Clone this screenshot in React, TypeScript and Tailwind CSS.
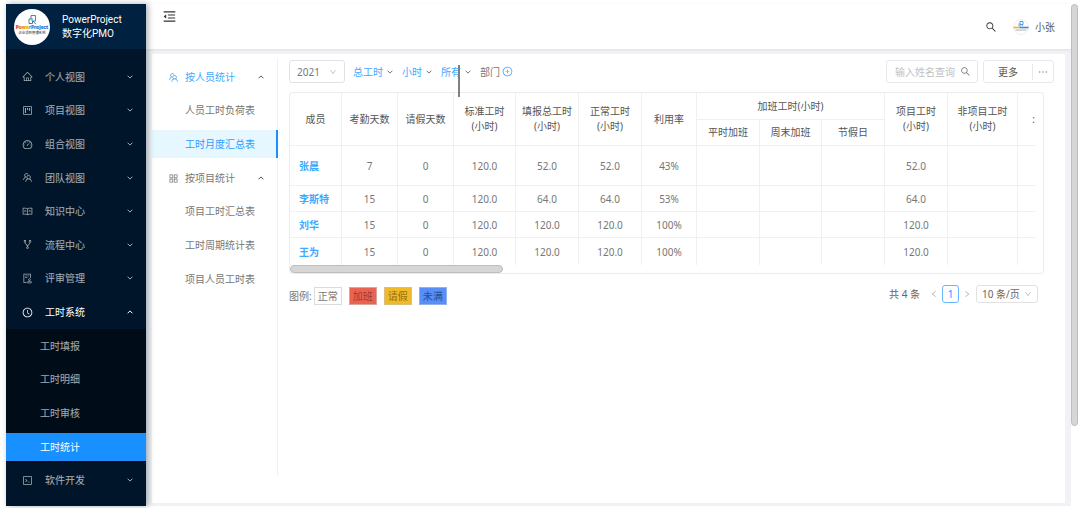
import type { IconType } from "react-icons";
import {
  AiOutlineAppstore,
  AiOutlineAudit,
  AiOutlineClockCircle,
  AiOutlineCode,
  AiOutlineDashboard,
  AiOutlineDown,
  AiOutlineEllipsis,
  AiOutlineFork,
  AiOutlineHome,
  AiOutlineLeft,
  AiOutlineMenuFold,
  AiOutlinePlusCircle,
  AiOutlineProject,
  AiOutlineRead,
  AiOutlineRight,
  AiOutlineSearch,
  AiOutlineTeam,
} from "react-icons/ai";

type MenuGroup = {
  label: string;
  icon: IconType;
  children?: string[];
};

const mainMenu: MenuGroup[] = [
  { label: "个人视图", icon: AiOutlineHome },
  { label: "项目视图", icon: AiOutlineProject },
  { label: "组合视图", icon: AiOutlineDashboard },
  { label: "团队视图", icon: AiOutlineTeam },
  { label: "知识中心", icon: AiOutlineRead },
  { label: "流程中心", icon: AiOutlineFork },
  { label: "评审管理", icon: AiOutlineAudit },
  {
    label: "工时系统",
    icon: AiOutlineClockCircle,
    children: ["工时填报", "工时明细", "工时审核", "工时统计"],
  },
  { label: "软件开发", icon: AiOutlineCode },
];

const reportMenu = [
  {
    label: "按人员统计",
    icon: AiOutlineTeam,
    children: ["人员工时负荷表", "工时月度汇总表"],
  },
  {
    label: "按项目统计",
    icon: AiOutlineAppstore,
    children: ["项目工时汇总表", "工时周期统计表", "项目人员工时表"],
  },
];

const activePage = "工时统计";
const activeReport = "工时月度汇总表";

const columnWidths = [52, 56, 56, 62, 63, 63, 55, 63, 62, 63, 63, 70, 17];

const members = [
  { name: "张晨", cells: ["7", "0", "120.0", "52.0", "52.0", "43%", "", "", "", "52.0", "", ""] },
  { name: "李斯特", cells: ["15", "0", "120.0", "64.0", "64.0", "53%", "", "", "", "64.0", "", ""] },
  { name: "刘华", cells: ["15", "0", "120.0", "120.0", "120.0", "100%", "", "", "", "120.0", "", ""] },
  { name: "王为", cells: ["15", "0", "120.0", "120.0", "120.0", "100%", "", "", "", "120.0", "", ""] },
];

const legend = [
  { label: "正常", className: "border-[#dcdcdc] bg-white text-[#777]" },
  { label: "加班", className: "border-[#d9a59d] bg-[#ea6350] text-[#a03c34]" },
  { label: "请假", className: "border-[#dcc07a] bg-[#f0b92a] text-[#96700f]" },
  { label: "未满", className: "border-[#94b2ea] bg-[#588ef5] text-[#2c4f8f]" },
];

function Arrow({ up = false, className = "" }: { up?: boolean; className?: string }) {
  return (
    <svg viewBox="0 0 6 4" className={`h-1 w-1.5 shrink-0 ${className}`} aria-hidden="true">
      <path
        d={up ? "M0.6 3.3 3 0.9 5.4 3.3" : "M0.6 0.7 3 3.1 5.4 0.7"}
        fill="none"
        stroke="currentColor"
        strokeWidth="1"
      />
    </svg>
  );
}

function Logo({ className }: { className: string }) {
  return (
    <svg viewBox="0 0 36 36" className={className} role="img" aria-label="PowerProject">
      <defs>
        <linearGradient id="brand" x1="0" x2="1">
          <stop offset="0" stopColor="#e5352b" />
          <stop offset="0.2" stopColor="#f0801e" />
          <stop offset="0.4" stopColor="#f0b400" />
          <stop offset="0.44" stopColor="#2f86e0" />
          <stop offset="1" stopColor="#1f6fd0" />
        </linearGradient>
      </defs>
      <circle cx="18" cy="18" r="18" fill="#fff" />
      <g fill="none" strokeWidth="1">
        <path d="M17 6.5h4.5v5.5h-3.5v-3" stroke="#3a8ad8" />
        <path d="M17 6.5v3.5h-2v4.5h3.5v-2.5M19 12l2.8 3.2" stroke="#5c7590" />
      </g>
      <text
        x="18"
        y="20.4"
        textAnchor="middle"
        fontSize="4.8"
        fontWeight="800"
        fill="url(#brand)"
        stroke="url(#brand)"
        strokeWidth="0.15"
      >
        PowerProject
      </text>
      <text x="18" y="24.8" textAnchor="middle" fontSize="3.4" fontWeight="500" fill="#555">
        企业项目管理系统
      </text>
    </svg>
  );
}

function Avatar() {
  return (
    <svg viewBox="0 0 16 16" className="size-4" aria-hidden="true">
      <circle cx="8" cy="8" r="7.5" fill="#fff" stroke="#eee" />
      <path d="M7 2.5h3v3h-3z" fill="none" stroke="#4a9be8" />
      <path d="M6 4.5v2.5h2M8.5 5.5l1.5 1.5" stroke="#8a98a6" fill="none" />
      <path d="M0.5 8.5h6.5" stroke="#efb03a" strokeWidth="1.6" />
      <path d="M7 8.5h8.5" stroke="#3f86d6" strokeWidth="1.6" />
      <path d="M2.5 11h11" stroke="#a5a5a5" strokeWidth="0.9" />
    </svg>
  );
}

function Sidebar() {
  return (
    <aside className="z-10 flex w-[140px] shrink-0 flex-col bg-[#001529] pb-[9px] text-white/65 shadow-[2px_0_6px_rgba(0,21,41,0.35)]">
      <div className="flex h-[45px] shrink-0 items-center gap-3 bg-[#002140] pl-2 text-white">
        <Logo className="size-9" />
        <p className="font-['Roboto','Noto_Sans_CJK_SC',sans-serif] leading-[14px]">
          PowerProject
          <br />
          数字化PMO
        </p>
      </div>

      <nav className="mt-[11px] flex flex-1 flex-col">
        {mainMenu.map(({ label, icon: Icon, children }) => (
          <div key={label} className={children ? "flex flex-5 flex-col" : "flex flex-1 flex-col"}>
            <button
              type="button"
              aria-expanded={Boolean(children)}
              className={`flex min-h-7 flex-1 items-center pr-[13px] pl-4 ${children ? "text-white" : ""}`}
            >
              <Icon className="mr-3 size-[11px]" />
              {label}
              <Arrow up={Boolean(children)} className="ml-auto" />
            </button>
            {children && (
              <div className="flex flex-4 flex-col bg-[#000c17]">
                {children.map((item) => (
                  <div key={item} className="flex flex-1 items-center">
                    <a
                      href="#"
                      className={`flex h-7 flex-1 items-center pl-[34px] ${
                        item === activePage ? "bg-[#1890ff] text-white" : ""
                      }`}
                    >
                      {item}
                    </a>
                  </div>
                ))}
              </div>
            )}
          </div>
        ))}
      </nav>
    </aside>
  );
}

function TopBar() {
  return (
    <header className="flex h-[45px] shrink-0 items-center bg-white pr-4 pl-4 text-[#555] shadow-[0_1px_3px_rgba(0,21,41,0.08)]">
      <button type="button" aria-label="收起菜单" className="mb-5 text-[#333]">
        <AiOutlineMenuFold className="size-[15px]" />
      </button>
      <button type="button" aria-label="搜索" className="ml-auto text-[#333]">
        <AiOutlineSearch className="size-3" />
      </button>
      <button type="button" className="ml-4 flex items-center gap-1.5">
        <Avatar />
        小张
      </button>
    </header>
  );
}

function ReportNav() {
  return (
    <nav className="my-1 h-[417px] w-[126px] shrink-0 border-r border-[#f0f0f0] pt-[5px]">
      {reportMenu.map(({ label, icon: Icon, children }) => {
        const current = children.includes(activeReport);
        return (
          <div key={label}>
            <button
              type="button"
              aria-expanded="true"
              className={`mb-[5px] flex h-7 w-full items-center pr-[13px] pl-4 ${current ? "text-[#40a9ff]" : ""}`}
            >
              <Icon className="mr-1.5 size-[11px]" />
              {label}
              <Arrow up className="ml-auto text-[#555]" />
            </button>
            {children.map((item) => (
              <a
                key={item}
                href="#"
                className={`mb-[6px] flex h-7 items-center pl-[33px] ${
                  item === activeReport ? "-mr-px border-r-2 border-[#1890ff] bg-[#e6f7ff] text-[#2a9dff]" : ""
                }`}
              >
                {item}
              </a>
            ))}
          </div>
        );
      })}
    </nav>
  );
}

function Toolbar() {
  return (
    <div className="flex items-center">
      <label className="relative">
        <span className="sr-only">年份</span>
        <select className="h-[23px] w-14 appearance-none rounded-[3px] border border-[#e2e2e2] bg-white pl-[7px] leading-4">
          <option>2021</option>
        </select>
        <AiOutlineDown className="pointer-events-none absolute top-2 right-2 size-2 text-[#bbb]" />
      </label>
      <div className="relative ml-2 flex items-center gap-[9px]">
        {["总工时", "小时", "所有"].map((filter) => (
          <button key={filter} type="button" className="flex items-center gap-1 text-[#40a9ff]">
            {filter}
            <Arrow className="text-[#777]" />
          </button>
        ))}
        <button type="button" className="flex items-center gap-0.5">
          部门
          <AiOutlinePlusCircle className="size-[11px] text-[#40a9ff]" />
        </button>
        <span className="absolute top-0 left-[105px] h-8 w-0.5 bg-[#808080]" />
      </div>

      <label className="ml-auto flex h-[23px] w-[92px] items-center rounded-[3px] border border-[#e8e8e8] pr-1.5 pl-2">
        <span className="sr-only">输入姓名查询</span>
        <input placeholder="输入姓名查询" className="h-5 w-full min-w-0 leading-5 outline-none placeholder:text-[#bfbfbf]" />
        <AiOutlineSearch className="size-[11px] shrink-0" />
      </label>
      <div className="ml-[5px] flex h-[23px] items-center rounded-[3px] border border-[#e8e8e8]">
        <button type="button" className="w-12 text-[#555]">
          更多
        </button>
        <button type="button" aria-label="更多操作" className="flex h-4 w-[21px] items-center justify-center border-l border-[#e8e8e8]">
          <AiOutlineEllipsis className="size-3" />
        </button>
      </div>
    </div>
  );
}

function HoursTable() {
  const th = "border-r border-b border-[#f0f0f0] font-normal";

  return (
    <div className="mt-[9px] mr-2.5 rounded-[3px] border border-[#ececec] pr-2">
      <div className="overflow-hidden">
        <table className="w-full table-fixed border-separate border-spacing-0 text-center">
          <colgroup>
            {columnWidths.map((width, i) => (
              <col key={i} style={{ width }} />
            ))}
          </colgroup>
          <thead className="leading-[15px] text-[#555]">
            <tr className="h-[27px]">
              <th rowSpan={2} className={th}>成员</th>
              <th rowSpan={2} className={th}>考勤天数</th>
              <th rowSpan={2} className={th}>请假天数</th>
              <th rowSpan={2} className={th}>标准工时<br />(小时)</th>
              <th rowSpan={2} className={th}>填报总工时<br />(小时)</th>
              <th rowSpan={2} className={th}>正常工时<br />(小时)</th>
              <th rowSpan={2} className={th}>利用率</th>
              <th colSpan={3} className={th}>加班工时(小时)</th>
              <th rowSpan={2} className={th}>项目工时<br />(小时)</th>
              <th rowSpan={2} className={th}>非项目工时<br />(小时)</th>
              <th rowSpan={2} className="border-b border-[#f0f0f0] text-right font-normal">:</th>
            </tr>
            <tr className="h-[26px]">
              <th className={th}>平时加班</th>
              <th className={th}>周末加班</th>
              <th className={th}>节假日</th>
            </tr>
          </thead>
          <tbody className="text-[#777]">
            {members.map(({ name, cells }) => (
              <tr key={name} className="group h-[26px] first:h-10 last:h-[27px]">
                <td className="border-r border-b border-[#f0f0f0] pl-[9px] text-left font-bold group-last:border-b-0">
                  <a href="#" className="text-[#40a9ff]">{name}</a>
                </td>
                {cells.map((cell, i) => (
                  <td
                    key={i}
                    className="border-r border-b border-[#f0f0f0] group-last:border-b-0 last:border-r-0"
                  >
                    {cell}
                  </td>
                ))}
              </tr>
            ))}
          </tbody>
        </table>
        <div className="h-2 w-[213px] rounded-full border border-[#bdbdbd] bg-[#d6d6d6]" />
      </div>
    </div>
  );
}

function TableFooter() {
  return (
    <div className="mt-[11px] mr-4 flex items-center">
      <div className="flex items-center gap-[7px]">
        <span className="-mr-[5px]">图例:</span>
        {legend.map(({ label, className }) => (
          <span key={label} className={`flex h-[18px] w-7 items-center justify-center border ${className}`}>
            {label}
          </span>
        ))}
      </div>

      <div className="mb-1 ml-auto flex h-[18px] items-center text-[#666]">
        <span>共 4 条</span>
        <button type="button" aria-label="上一页" className="ml-2.5 text-[#aaa]">
          <AiOutlineLeft className="size-2" />
        </button>
        <button type="button" className="mx-1 h-[18px] w-[17px] rounded-[3px] border border-[#69b8ff] text-[#1890ff]">
          1
        </button>
        <button type="button" aria-label="下一页" className="mr-[5px] text-[#aaa]">
          <AiOutlineRight className="size-2" />
        </button>
        <label className="relative">
          <span className="sr-only">每页条数</span>
          <select className="h-[18px] w-[62px] appearance-none rounded-[3px] border border-[#e2e2e2] bg-white pl-[5px] leading-4">
            <option>10 条/页</option>
          </select>
          <AiOutlineDown className="pointer-events-none absolute top-[5px] right-1.5 size-2 text-[#bbb]" />
        </label>
      </div>
    </div>
  );
}

export default function App() {
  return (
    <div className="flex min-h-screen bg-white pt-1 pb-0.5 pl-1.5 font-['Noto_Sans','Noto_Sans_CJK_SC',sans-serif] text-[10px] leading-[14px] text-[#777]">
      <Sidebar />
      <div className="flex min-w-0 flex-1 flex-col bg-[#f0f2f5]">
        <TopBar />
        <div className="mx-1.5 mt-[5px] mb-[3px] flex flex-1 bg-white">
          <ReportNav />
          <main className="min-w-0 flex-1 pt-1.5 pr-[11px] pl-[11px]">
            <Toolbar />
            <HoursTable />
            <TableFooter />
          </main>
        </div>
      </div>
      <div className="mr-0.5 h-[422px] w-[7px] rounded-full border border-[#bdbdbd] bg-[#d6d6d6]" />
    </div>
  );
}
